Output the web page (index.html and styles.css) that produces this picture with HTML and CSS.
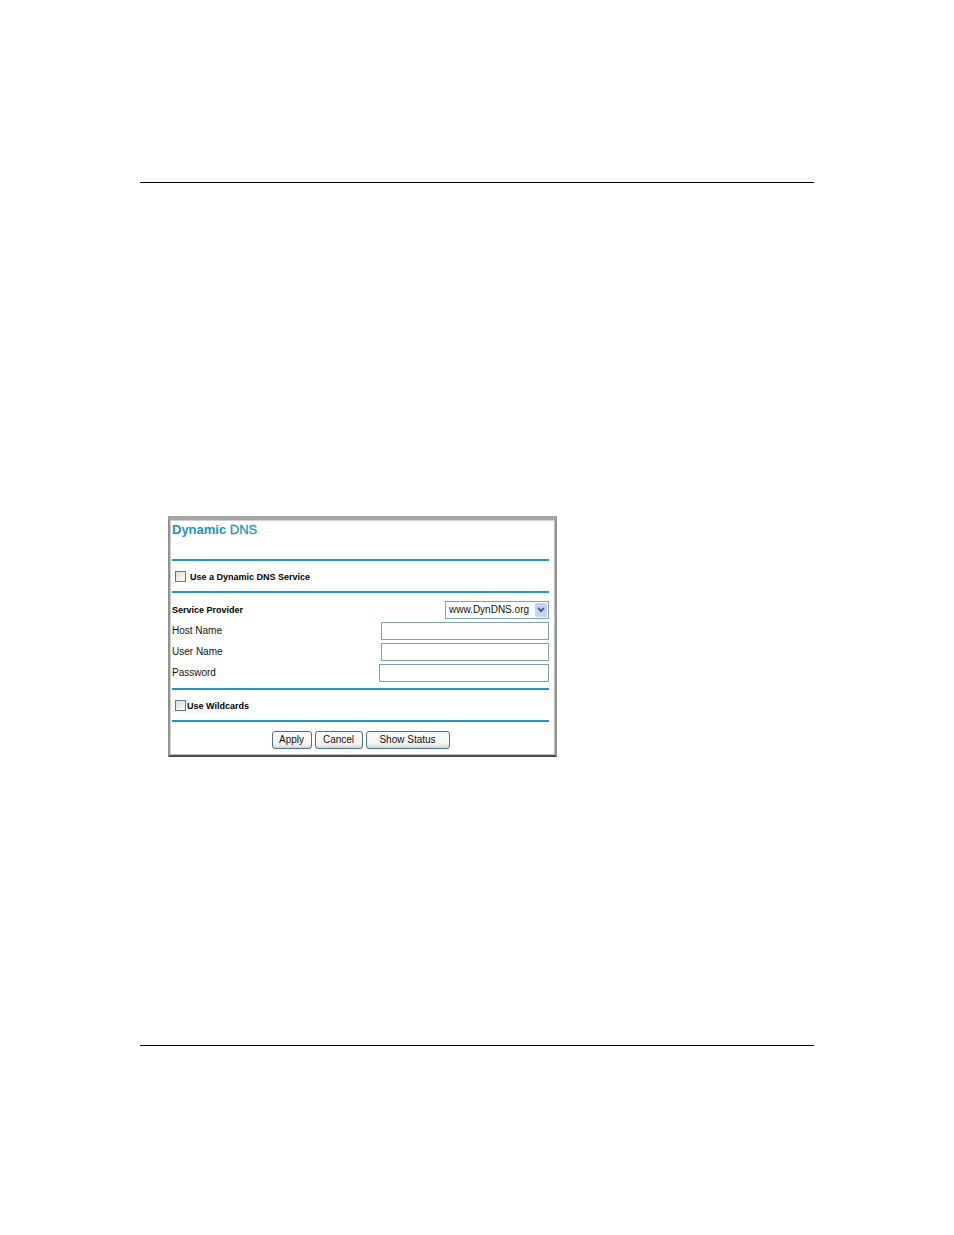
FILE: index.html
```html
<!DOCTYPE html>
<html lang="en">
<head>
<meta charset="utf-8">
<title>Dynamic DNS</title>
<link rel="stylesheet" href="styles.css">
</head>
<body>
<main class="sheet">
  <form class="panel">
    <h1 class="title">Dynamic <span class="title-light">DNS</span></h1>
    <div class="option">
      <input class="check" type="checkbox" id="use-ddns">
      <label class="option-label spaced" for="use-ddns">Use a Dynamic DNS Service</label>
    </div>
    <div class="fields">
      <div class="row">
        <label class="strong" for="provider">Service Provider</label>
        <span class="select-box">
          <select class="select" id="provider"><option>www.DynDNS.org</option></select>
          <svg class="arrow" viewBox="0 0 12 14" aria-hidden="true"><rect width="12" height="14" rx="1" fill="#c3d3fb"/><path d="M3 5l3 3 3-3" fill="none" stroke="#4d6185" stroke-width="2"/></svg>
        </span>
      </div>
      <div class="row">
        <label for="host">Host Name</label>
        <input class="field" type="text" id="host">
      </div>
      <div class="row">
        <label for="user">User Name</label>
        <input class="field" type="text" id="user">
      </div>
      <div class="row">
        <label for="password">Password</label>
        <input class="field field-wide" type="password" id="password">
      </div>
    </div>
    <div class="option">
      <input class="check" type="checkbox" id="wildcards">
      <label class="option-label" for="wildcards">Use Wildcards</label>
    </div>
    <div class="actions">
      <button class="button apply" type="button">Apply</button>
      <button class="button cancel" type="button">Cancel</button>
      <button class="button status" type="button">Show Status</button>
    </div>
  </form>
</main>
</body>
</html>
```
FILE: styles.css
```css
* {
  box-sizing: border-box;
}

body {
  margin: 0;
  background: #fff;
  color: #111;
  font: 10px/12px "Liberation Sans", Arial, sans-serif;
}

.sheet {
  margin: 182px 140px 0;
  padding: 333px 28px 288px;
  border-top: 1px solid #000;
  border-bottom: 1px solid #000;
}

.panel {
  max-width: 389px;
  padding: 0 6px 0 2px;
  border: 2px solid;
  border-top-width: 4px;
  border-color: #a6a6a6 #929292 #4a4a4a #929292;
  box-shadow: inset 1px 1px 1px #ccc, inset -1px -1px 1px #bbb;
}

.title {
  margin: 0;
  padding: 2px 0 21px;
  color: #1994bd;
  font-size: 13px;
  line-height: 16px;
}

.title-light {
  font-weight: 400;
  -webkit-text-stroke: 0.3px;
}

.option {
  display: flex;
  align-items: center;
  height: 34px;
  padding: 2px 3px 0;
  border-top: 2px solid #2296bb;
  border-bottom: 2px solid #2296bb;
}

.check {
  appearance: none;
  flex: none;
  width: 11px;
  height: 11px;
  margin: 0 1px 1px 0;
  border: 1px solid #4f7fa3;
  background: linear-gradient(135deg, #dcdcd7, #fff);
}

.check:checked {
  background: #21a121;
}

.option-label,
.strong {
  font-size: 9px;
  font-weight: 700;
  color: #000;
}

.spaced {
  margin-left: 3px;
}

.fields {
  display: grid;
  gap: 3px;
  padding: 8px 0 6px;
}

.row {
  display: flex;
  align-items: center;
  justify-content: space-between;
  height: 18px;
}

.field {
  width: 168px;
  height: 18px;
  padding: 1px 3px;
  border: 1px solid #7f9db9;
  background: #fff;
  font: inherit;
}

.field-wide {
  width: 170px;
}

.select-box {
  position: relative;
  width: 104px;
  height: 18px;
}

.select {
  appearance: none;
  display: block;
  width: 100%;
  height: 18px;
  padding: 0 14px 0 3px;
  border: 1px solid #7f9db9;
  border-radius: 0;
  background: #fff;
  color: #111;
  font: inherit;
}

.arrow {
  position: absolute;
  top: 2px;
  right: 2px;
  width: 12px;
  height: 14px;
  pointer-events: none;
}

.actions {
  display: flex;
  justify-content: center;
  gap: 3px;
  padding: 9px 0 6px;
}

.button {
  height: 18px;
  padding: 0;
  border: 1px solid #4a6f98;
  border-radius: 3px;
  background: linear-gradient(#fff, #f3f2ee 75%, #d8d4ca);
  color: #111;
  font: inherit;
}

.apply {
  width: 40px;
}

.cancel {
  width: 48px;
}

.status {
  width: 84px;
}
```
